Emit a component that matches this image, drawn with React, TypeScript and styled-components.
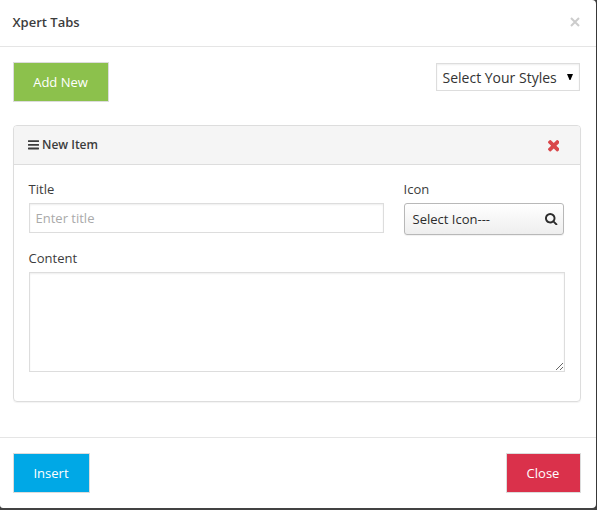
import React from 'react';
import styled, { createGlobalStyle } from 'styled-components';

const GlobalStyle = createGlobalStyle`
  * { box-sizing: border-box; }
  body { margin: 0; background: #434343; overflow: hidden; }
`;

const Modal = styled.div`
  width: 596px;
  height: 508px;
  display: flex;
  flex-direction: column;
  background: #fff;
  border-radius: 0 4px 4px 3px;
  box-shadow: 0 1px 4px rgba(0, 0, 0, 0.4);
  color: #3c3c3c;
  font: 13px/18px 'Open Sans', sans-serif;
`;

const Header = styled.header`
  height: 47px;
  display: flex;
  justify-content: space-between;
  padding: 13px 15.5px 0 12.5px;
  border-bottom: 1px solid #e5e5e5;
`;

const Heading = styled.h3`
  margin: 0;
  font-size: 13px;
  line-height: 18px;
  font-weight: 600;
`;

const Dismiss = styled.button`
  width: 12px;
  height: 17px;
  padding: 0;
  border: 0;
  background: none;
  display: flex;
  align-items: center;
  justify-content: center;
`;

const Body = styled.main`
  height: 390px;
  padding: 15px 15px 0 13px;
`;

const Toolbar = styled.div`
  display: flex;
  justify-content: space-between;
  align-items: flex-start;
  height: 63px;
`;

const Button = styled.button<{ $color: string; $width: number }>`
  width: ${p => p.$width}px;
  height: 40px;
  padding: 0 1px 0 0;
  border: 1px solid #dcdcdc;
  background: ${p => p.$color};
  color: #fff;
  font: 13px/18px 'Open Sans', sans-serif;
`;

const StyleSelect = styled.div`
  width: 144px;
  height: 28px;
  margin: 1px 1px 0 0;
  padding: 1px 6px 0 5.5px;
  display: flex;
  align-items: center;
  justify-content: space-between;
  border: 1px solid #ddd;
  box-shadow: inset 0 1px 2px rgba(0, 0, 0, 0.07);
  color: #333;
  font-size: 14px;

  svg { margin-bottom: 2px; }
`;

const Panel = styled.section`
  height: 277px;
  border: 1px solid #ddd;
  border-radius: 4px;
  box-shadow: 0 1px 1px rgba(0, 0, 0, 0.05);
`;

const PanelHeader = styled.div`
  height: 39px;
  display: flex;
  align-items: center;
  justify-content: space-between;
  padding: 0 21px 0 14px;
  border-bottom: 1px solid #ddd;
  border-radius: 3px 3px 0 0;
  background: #f5f5f5;
`;

const PanelTitle = styled.div`
  display: flex;
  align-items: center;
  gap: 3px;
  font-size: 12px;
  font-weight: 600;
`;

const RemoveIcon = styled.svg`
  width: 11.5px;
  height: 11.5px;
  margin-top: 2px;
  fill: #d9474a;
`;

const Fields = styled.div`
  display: grid;
  grid-template-columns: 355px 160px;
  column-gap: 20px;
  padding: 15px 15px 0;
`;

const Field = styled.label<{ $wide?: boolean }>`
  display: flex;
  flex-direction: column;
  gap: 5px;
  height: ${p => (p.$wide ? 123 : 69)}px;
  width: ${p => (p.$wide ? '536px' : 'auto')};
  grid-column: ${p => (p.$wide ? '1 / -1' : 'auto')};
`;

const Caption = styled.span`
  margin-left: -0.4px;
`;

const TextInput = styled.input`
  height: 30px;
  padding: 0 5.5px;
  border: 1px solid #ddd;
  box-shadow: inset 0 1px 2px rgba(0, 0, 0, 0.07);
  font: 13px/18px 'Open Sans', sans-serif;
  &::placeholder { color: #aaa; }
`;

const TextArea = styled.textarea`
  height: 100px;
  flex: none;
  border: 1px solid #ddd;
  box-shadow: inset 0 1px 2px rgba(0, 0, 0, 0.07);
  resize: both;
`;

const IconPicker = styled.div`
  height: 32px;
  padding: 0 5.5px 0 7.6px;
  display: flex;
  align-items: center;
  justify-content: space-between;
  border: 1px solid #b8b8b8;
  border-radius: 3px;
  background: linear-gradient(#fff, #eee);
  box-shadow: 0 1px 1px rgba(0, 0, 0, 0.06);
  color: #2c2c2c;
`;

const Footer = styled.footer`
  height: 71px;
  display: flex;
  justify-content: space-between;
  padding: 15px 15px 0 13px;
  border-top: 1px solid #e5e5e5;
`;

export default function App() {
  return (
    <>
      <GlobalStyle />
      <Modal>
        <Header>
          <Heading>Xpert Tabs</Heading>
          <Dismiss aria-label="Dismiss">
            <svg width="12" height="12" viewBox="0 0 12 12">
              <path d="M2 2l8 8M10 2l-8 8" stroke="#ccc" strokeWidth="2" />
            </svg>
          </Dismiss>
        </Header>
        <Body>
          <Toolbar>
            <Button $color="#8cc14c" $width={96}>Add New</Button>
            <StyleSelect>
              <span>Select Your Styles</span>
              <svg width="6" height="6" viewBox="0 0 6 6">
                <path d="M0 0h6L3.5 6h-1z" fill="#000" />
              </svg>
            </StyleSelect>
          </Toolbar>
          <Panel>
            <PanelHeader>
              <PanelTitle>
                <svg width="11" height="10" viewBox="0 0 11 10" fill="#3c3c3c">
                  <rect y="0.2" width="11" height="1.9" rx="0.4" />
                  <rect y="3.9" width="11" height="1.9" rx="0.4" />
                  <rect y="7.6" width="11" height="1.9" rx="0.4" />
                </svg>
                <span>New Item</span>
              </PanelTitle>
              <RemoveIcon viewBox="302 302 1188 1188">
                <path d="M1490 1322q0 40-28 68l-136 136q-28 28-68 28t-68-28l-294-294-294 294q-28 28-68 28t-68-28l-136-136q-28-28-28-68t28-68l294-294-294-294q-28-28-28-68t28-68l136-136q28-28 68-28t68 28l294 294 294-294q28-28 68-28t68 28l136 136q28 28 28 68t-28 68l-294 294 294 294q28 28 28 68z" transform="translate(0 -64)" />
              </RemoveIcon>
            </PanelHeader>
            <Fields>
              <Field>
                <Caption>Title</Caption>
                <TextInput placeholder="Enter title" />
              </Field>
              <Field>
                <Caption>Icon</Caption>
                <IconPicker>
                  <span>Select Icon---</span>
                  <svg width="12.4" height="12.4" viewBox="64 128 1664 1664" fill="#2c2c2c">
                    <path d="M1216 832q0-185-131.5-316.5t-316.5-131.5-316.5 131.5-131.5 316.5 131.5 316.5 316.5 131.5 316.5-131.5 131.5-316.5zm512 832q0 52-38 90t-90 38q-54 0-90-38l-343-342q-179 124-399 124-143 0-273.5-55.5t-225-150-150-225-55.5-273.5 55.5-273.5 150-225 225-150 273.5-55.5 273.5 55.5 225 150 150 225 55.5 273.5q0 220-124 399l343 343q37 37 37 90z" />
                  </svg>
                </IconPicker>
              </Field>
              <Field $wide>
                <Caption>Content</Caption>
                <TextArea />
              </Field>
            </Fields>
          </Panel>
        </Body>
        <Footer>
          <Button $color="#00a8e6" $width={77}>Insert</Button>
          <Button $color="#da314b" $width={75}>Close</Button>
        </Footer>
      </Modal>
    </>
  );
}
